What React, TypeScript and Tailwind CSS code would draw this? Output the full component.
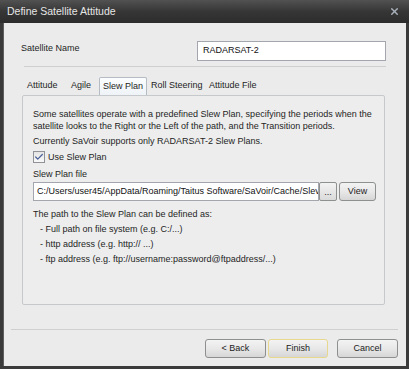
import { Check, X } from 'lucide-react'

const font = { fontFamily: '"Liberation Sans", Arial, sans-serif' }

function Tab({ label, active, width }: { label: string; active?: boolean; width: string }) {
  if (active) {
    return (
      <div className={'-mb-px flex h-[19px] items-center rounded-t-[2px] border border-b-0 border-[#b5bcc4] bg-gradient-to-b from-[#fbfdfe] to-[#eef3f7] pl-[3px] text-[#1e1e1e] ' + width}>
        {label}
      </div>
    )
  }
  return <div className={'flex h-[18px] items-center pl-[4px] text-[#1e1e1e] ' + width}>{label}</div>
}

function WinButton({ label, isDefault }: { label: string; isDefault?: boolean }) {
  return (
    <button
      className={
        'flex h-[19px] items-center justify-center rounded-[3px] border bg-gradient-to-b from-[#f3f3f3] via-[#e8e8e8] to-[#d6d6d6] text-[9px] text-[#1b1b1b] ' +
        (isDefault ? 'w-[60px] border-[#e8d88e]' : 'w-[61px] border-[#8e8f8f]')
      }
    >
      {label}
    </button>
  )
}

export default function App() {
  return (
    <div className="flex h-[369px] w-[409px] flex-col bg-[#3a3a3a] text-[9px]" style={font}>
      {/* Title bar */}
      <div className="flex h-[23px] items-center justify-between bg-gradient-to-b from-[#525252] via-[#363636] to-[#2c2c2c] pl-[7px] pr-[9px]">
        <span className="text-[10.5px] text-[#e6e6e6]">Define Satellite Attitude</span>
        <X size={11} strokeWidth={3.2} className="text-[#a9b1bb]" />
      </div>

      {/* Client area */}
      <div className="mx-[3px] mb-[3px] flex flex-1 flex-col border-l border-[#5e5e5e] bg-[#ebebeb]">
        <div className="mt-[18px] flex h-[20px] items-center justify-between pl-[17px] pr-[20px]">
          <span className="-mt-[5px] text-[#1e1e1e]">Satellite Name</span>
          <div className="flex h-[20px] w-[189px] items-center border border-[#a3a7ad] bg-white px-[5px] text-[#111]">
            RADARSAT-2
          </div>
        </div>

        <div className="ml-[20px] mr-[20px] mt-[5px] h-px bg-[#cfcfcf]" />

        {/* Tabs */}
        <div className="ml-[19px] mt-[10px] flex items-end">
          <Tab label="Attitude" width="w-[44px]" />
          <Tab label="Agile" width="w-[32px]" />
          <Tab label="Slew Plan" active width="w-[48px]" />
          <Tab label="Roll Steering" width="w-[58px]" />
          <Tab label="Attitude File" width="w-[56px]" />
        </div>

        <div className="ml-[18px] mr-[21px] flex h-[210px] flex-col rounded-[2px] border border-[#c6c9cc] bg-[#ededed] pl-[10px] pr-[7px] pt-[12px] text-[#1e1e1e]">
          <p className="leading-[12px]">
            Some satellites operate with a predefined Slew Plan, specifying the periods when the satellite looks to the Right or the Left of the path, and the Transition periods.
          </p>
          <p className="mt-[3px] leading-[12px]">Currently SaVoir supports only RADARSAT-2 Slew Plans.</p>

          <label className="mt-[4px] flex items-center gap-[3px] leading-[12px]">
            <span className="flex h-[12px] w-[12px] items-center justify-center border border-[#8f9296] bg-gradient-to-b from-[#e4e4e4] to-[#f8f8f8]">
              <Check size={10} strokeWidth={3} className="text-[#4b5f99]" />
            </span>
            Use Slew Plan
          </label>

          <span className="mt-[5px] leading-[12px]">Slew Plan file</span>

          <div className="mt-[2px] flex h-[19px] items-center">
            <div className="flex h-[19px] w-[286px] shrink-0 items-center overflow-hidden whitespace-nowrap border border-[#a3a7ad] bg-white px-[3px] text-[#111]">
              C:/Users/user45/AppData/Roaming/Taitus Software/SaVoir/Cache/Slev
            </div>
            <div className="flex h-[19px] w-[18px] shrink-0 items-end justify-center rounded-[2px] border border-[#8e8f8f] bg-gradient-to-b from-[#f3f3f3] to-[#dadada] pb-[3px] leading-none text-[#222]">
              ...
            </div>
            <div className="ml-[2px] flex h-[19px] w-[37px] shrink-0 items-center justify-center rounded-[3px] border border-[#8e8f8f] bg-gradient-to-b from-[#f3f3f3] via-[#e8e8e8] to-[#d6d6d6] text-[#1b1b1b]">
              View
            </div>
          </div>

          <p className="mt-[7px] leading-[12px]">The path to the Slew Plan can be defined as:</p>
          <div className="ml-[7px] mt-[3px] flex flex-col gap-[3px] leading-[12px]">
            <span>- Full path on file system (e.g. C:/...)</span>
            <span>- http address (e.g. http:// ...)</span>
            <span>- ftp address (e.g. ftp://username:password@ftpaddress/...)</span>
          </div>
        </div>

        <div className="ml-[7px] mr-[8px] mt-[24px] h-px bg-[#cfcfcf]" />

        <div className="mr-[8px] mt-[9px] flex justify-end">
          <WinButton label="< Back" />
          <div className="ml-[2px]">
            <WinButton label="Finish" isDefault />
          </div>
          <div className="ml-[9px]">
            <WinButton label="Cancel" />
          </div>
        </div>
      </div>
    </div>
  )
}
